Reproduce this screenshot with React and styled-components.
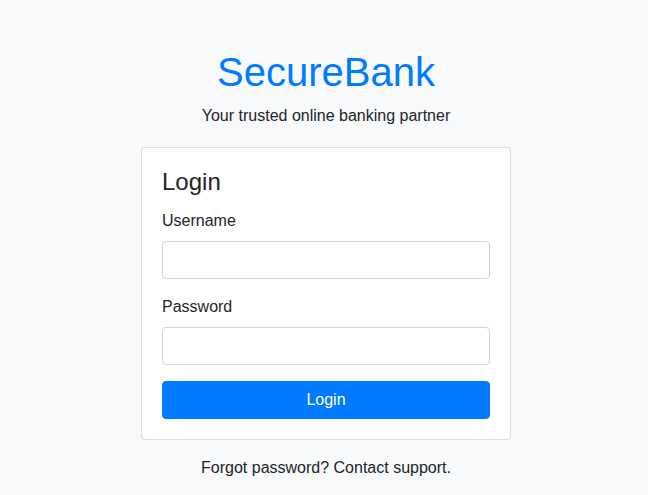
import styled, { createGlobalStyle } from 'styled-components';

const GlobalStyle = createGlobalStyle`
    * {
        box-sizing: border-box;
    }
    body {
        margin: 0;
        background: #f8f9fa;
        color: #212529;
        font-family: "Liberation Sans", Arial, sans-serif;
        font-size: 16px;
        line-height: 1.5;
    }
`;

export default function App() {
    return (
        <>
            <GlobalStyle />
            <Page>
                <Header>
                    <Brand>SecureBank</Brand>
                    <Tagline>Your trusted online banking partner</Tagline>
                </Header>
                <Card>
                    <CardTitle>Login</CardTitle>
                    <form onSubmit={e => e.preventDefault()}>
                        <Field>
                            <Label htmlFor="username">Username</Label>
                            <Input id="username" type="text" />
                        </Field>
                        <Field>
                            <Label htmlFor="password">Password</Label>
                            <Input id="password" type="password" />
                        </Field>
                        <SubmitButton type="submit">Login</SubmitButton>
                    </form>
                </Card>
                <Footer>Forgot password? Contact support.</Footer>
            </Page>
        </>
    )
}

const Page = styled.div`
    display: flex;
    flex-direction: column;
    align-items: center;
    padding: 48px 0 0 4px;
`;

const Header = styled.div`
    text-align: center;
    margin-bottom: 19px;
`;

const Brand = styled.h1`
    margin: 0 0 8px;
    font-size: 40px;
    font-weight: 400;
    line-height: 1.2;
    color: #007bff;
`;

const Tagline = styled.p`
    margin: 0;
`;

const Card = styled.div`
    width: 370px;
    padding: 20px;
    background: #ffffff;
    border: 1px solid rgba(0, 0, 0, 0.125);
    border-radius: 4px;
`;

const CardTitle = styled.h4`
    margin: 0 0 12px;
    font-size: 24px;
    font-weight: 400;
    line-height: 1.2;
`;

const Field = styled.div`
    margin-bottom: 16px;
`;

const Label = styled.label`
    display: inline-block;
    margin-bottom: 8px;
`;

const Input = styled.input`
    display: block;
    width: 100%;
    height: 38px;
    padding: 6px 12px;
    font: inherit;
    color: #495057;
    background: #ffffff;
    border: 1px solid #ced4da;
    border-radius: 4px;
    outline: none;
`;

const SubmitButton = styled.button`
    display: block;
    width: 100%;
    height: 38px;
    padding: 6px 12px;
    font: inherit;
    color: #ffffff;
    background: #007bff;
    border: 1px solid #007bff;
    border-radius: 4px;
    cursor: pointer;
`;

const Footer = styled.p`
    margin: 16px 0 0;
    text-align: center;
`;
